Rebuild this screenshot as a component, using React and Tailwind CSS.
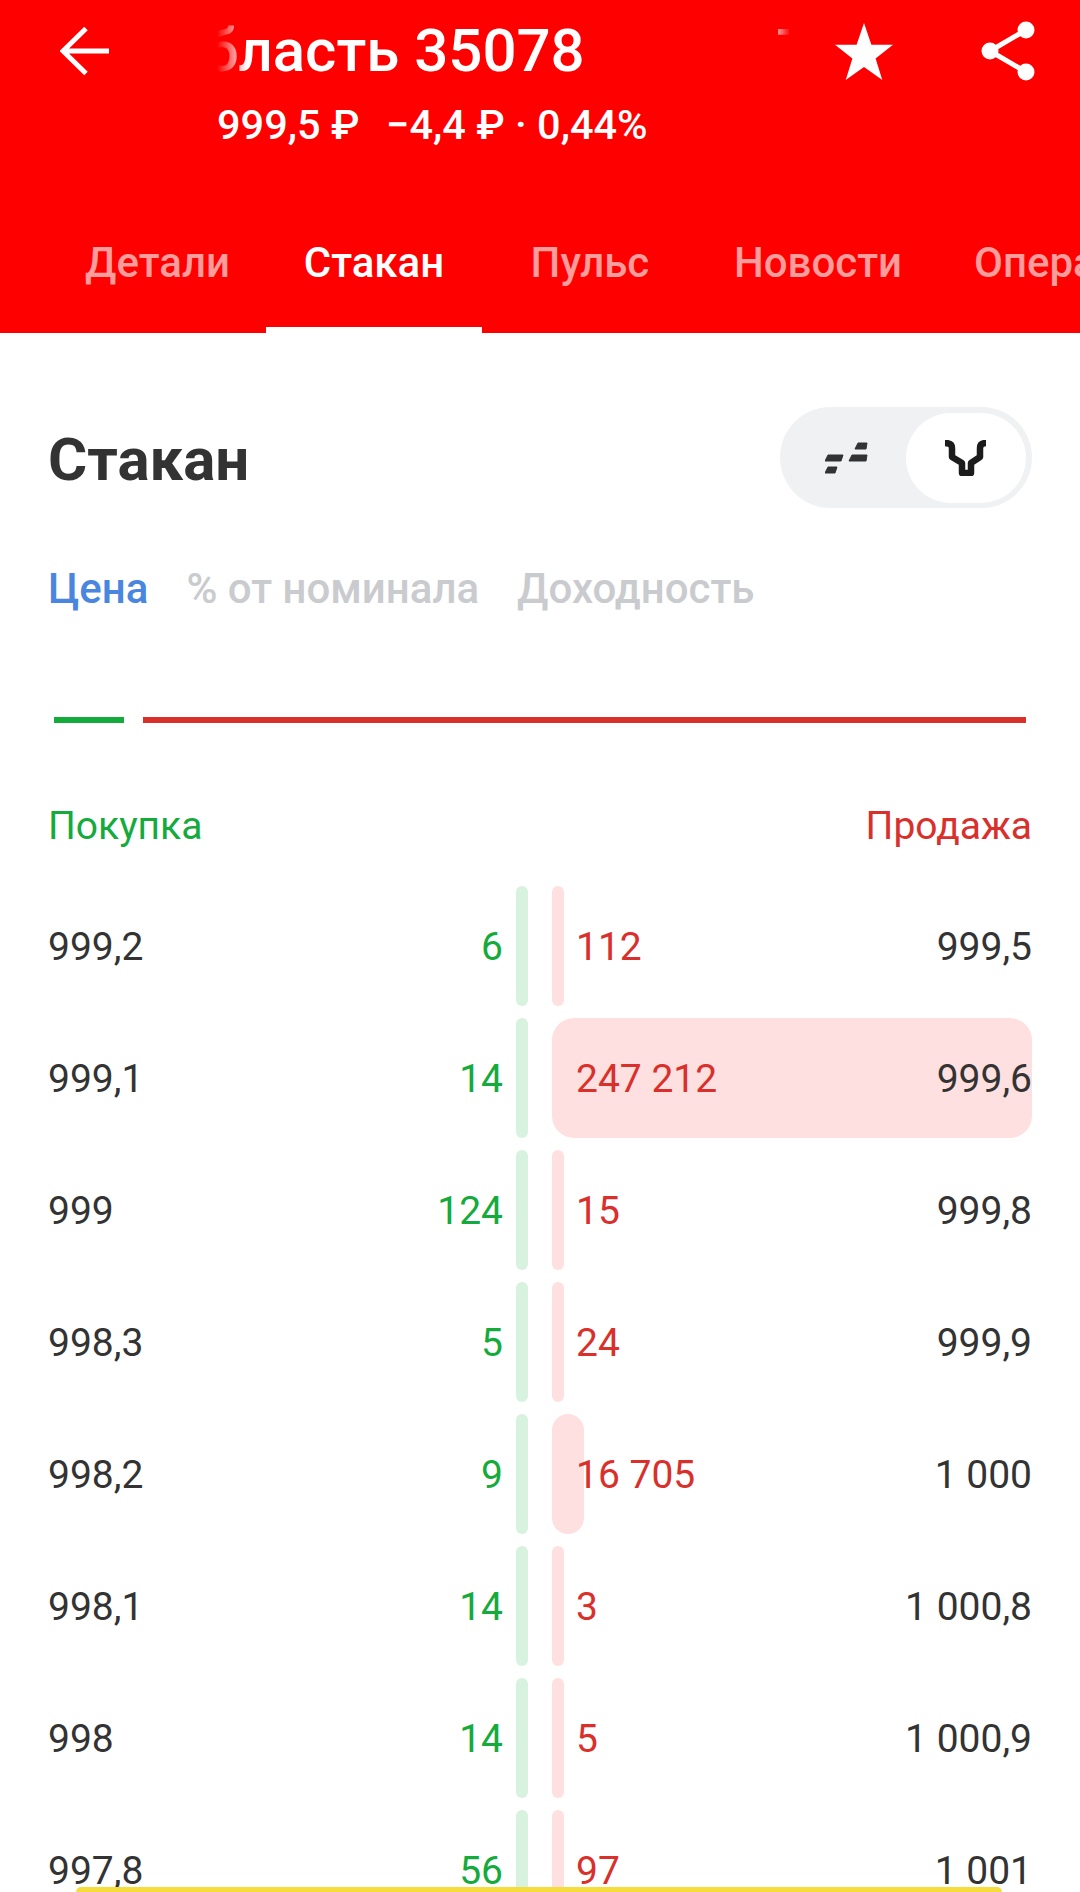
const rows = [
  ["999,2", "6", "112", "999,5", 12],
  ["999,1", "14", "247 212", "999,6", 480],
  ["999", "124", "15", "999,8", 12],
  ["998,3", "5", "24", "999,9", 12],
  ["998,2", "9", "16 705", "1 000", 32],
  ["998,1", "14", "3", "1 000,8", 12],
  ["998", "14", "5", "1 000,9", 12],
  ["997,8", "56", "97", "1 001", 12],
];

const tabs = [
  ["Детали", false],
  ["Стакан", true],
  ["Пульс", false],
  ["Новости", false],
  ["Операции", false],
];

function Row({ row }) {
  const [bid, bidQty, askQty, ask, fill] = row;
  return (
    <div className="flex h-[120px] shrink-0 items-center text-[39px] leading-[50px]">
      <div className="flex flex-1 items-center justify-between pr-[13px] pt-[2px]">
        <span className="text-[#333333]">{bid}</span>
        <span className="text-[#14ab3c]">{bidQty}</span>
      </div>
      <div className="h-full w-[12px] shrink-0 rounded-full bg-[#d8f2e0]" />
      <div className="relative ml-[24px] flex h-full w-[480px] shrink-0 items-center justify-between pl-[24px] pt-[2px]">
        <div
          className={fill > 12 ? "absolute inset-y-0 left-0 rounded-[22px] bg-[#ffe0e0]" : "absolute inset-y-0 left-0 rounded-full bg-[#ffe0e0]"}
          style={{ width: fill }}
        />
        <span className="relative text-[#d9302c]">{askQty}</span>
        <span className="relative text-[#333333]">{ask}</span>
      </div>
    </div>
  );
}

export default function App() {
  return (
    <div className="relative h-[1892px] w-[1080px] overflow-hidden bg-white font-['Roboto',sans-serif]">
      <header className="flex h-[333px] flex-col justify-between bg-[#ff0000] text-white">
        <div className="flex items-start pl-[60px] pt-[21px]">
          <svg width="49" height="60" viewBox="0 0 49 60" fill="none" stroke="white" strokeWidth="5" className="shrink-0">
            <path d="M49 30H3M26 7.500L3 30l23 22.500" />
          </svg>
          <div className="ml-[108px] w-[573px] shrink-0">
            <div className="overflow-hidden [mask-image:linear-gradient(to_right,transparent,black_30px,black_calc(100%-20px),transparent)]">
              <div className="ml-[-303px] flex gap-[192px] whitespace-nowrap text-[60px] font-medium leading-[60px]">
                <span>Томская область 35078</span>
                <span>Томская область 35078</span>
              </div>
            </div>
            <div className="mt-[21px] whitespace-pre text-[41.500px] font-medium leading-[46px]">
              999,5 ₽  <span className="ml-[6px]">−4,4 ₽ · 0,44%</span>
            </div>
          </div>
          <svg width="58" height="58" viewBox="0 0 58 58" fill="white" className="ml-[45px] mt-[2px] shrink-0">
            <path d="M29 0l7.400 21.800H58L40.600 35.400 47.300 57 29 44 10.700 57l6.700-21.600L0 21.800h21.600z" />
          </svg>
          <svg width="56" height="62" viewBox="0 0 56 62" fill="white" stroke="white" className="ml-[88px] shrink-0">
            <path d="M45 9L9 30l36 21" fill="none" strokeWidth="5" />
            <circle cx="45" cy="9" r="8.500" strokeWidth="0" />
            <circle cx="9" cy="30" r="8.500" strokeWidth="0" />
            <circle cx="45" cy="51" r="8.500" strokeWidth="0" />
          </svg>
        </div>
        <div className="flex overflow-hidden pl-[49px]">
          {tabs.map(([label, active]) => (
            <div
              key={label}
              className={
                active
                  ? "flex h-[134px] min-w-[216px] shrink-0 items-center justify-center border-b-[6px] border-white px-[36px] text-[42px] font-medium leading-[50px] text-white"
                  : "flex h-[134px] min-w-[216px] shrink-0 items-center justify-center border-b-[6px] border-transparent px-[36px] text-[42px] font-medium leading-[50px] text-[#ff9c9c]"
              }
            >
              {label}
            </div>
          ))}
        </div>
      </header>

      <main className="px-12">
        <div className="mt-[74px] flex items-center justify-between">
          <h1 className="pt-[5px] text-[60px] font-bold leading-[70px] text-[#333333]">Стакан</h1>
          <div className="flex h-[101px] w-[252px] items-center justify-between rounded-full bg-[#eff1f2] pl-[45px] pr-[6px]">
            <svg width="44" height="32" viewBox="0 0 44 32" fill="#333333">
              <path d="M3 13h15l-2 6H0zM3 25h9l-2 6H0zM27 13h15l-1 6H24zM33 1h9l-1 6H30z" stroke="#333333" strokeWidth="1" strokeLinejoin="round" />
            </svg>
            <div className="flex h-[90px] w-[120px] items-center justify-center rounded-full bg-white">
              <svg width="44" height="36" viewBox="0 0 44 36" fill="none" stroke="#1c1c1c" strokeWidth="6.500" strokeLinejoin="round">
                <path d="M1 3c4 0 7 1 7 5v9l10 6v10h9V23l9-6V8c0-4 3-5 6-5" />
              </svg>
            </div>
          </div>
        </div>

        <div className="mt-[56px] flex gap-[38px] text-[42px] font-medium leading-[50px] text-[#c9cbce]">
          <span className="text-[#4a86e0]">Цена</span>
          <span>% от номинала</span>
          <span>Доходность</span>
        </div>

        <div className="mt-[103px] flex gap-[19px] px-[6px]">
          <div className="h-[6px] w-[70px] bg-[#14ab3c]" />
          <div className="h-[6px] flex-1 bg-[#d9302c]" />
        </div>

        <div className="mt-[78px] flex justify-between text-[39px] leading-[50px]">
          <span className="text-[#14ab3c]">Покупка</span>
          <span className="text-[#d9302c]">Продажа</span>
        </div>

        <div className="mt-[35px] flex flex-col gap-[12px]">
          {rows.map((row) => (
            <Row key={row[0]} row={row} />
          ))}
        </div>
      </main>

      <div className="absolute bottom-0 left-[76px] h-[5px] w-[926px] rounded-t-[5px] bg-[#f6dc3c]" />
    </div>
  );
}
